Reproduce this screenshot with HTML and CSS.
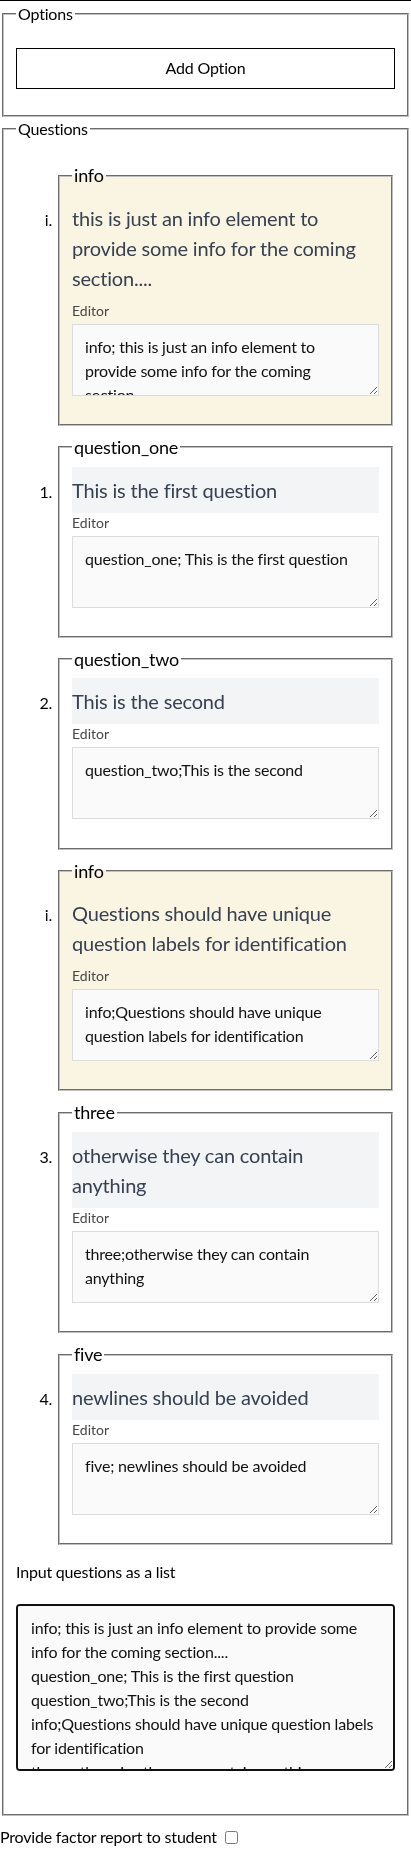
FILE: index.html
```html
<!DOCTYPE html>
<html lang="en">
<head>
<meta charset="utf-8">
<title>Questions editor</title>
<link rel="stylesheet" href="styles.css">
</head>
<body>
<div class="topbar"></div>
<form class="form">
<fieldset class="group">
<legend>Options</legend>
<button type="button" class="add-btn">Add Option</button>
</fieldset>
<fieldset class="group">
<legend>Questions</legend>
<ol class="qlist">
<li class="item info">
<fieldset class="card">
<legend>info</legend>
<div class="qtext">this is just an info element to provide some info for the coming section....</div>
<label class="editor-label">Editor</label>
<textarea class="editor">info; this is just an info element to provide some info for the coming section....</textarea>
</fieldset>
</li>
<li class="item question">
<fieldset class="card">
<legend>question_one</legend>
<div class="qtext">This is the first question</div>
<label class="editor-label">Editor</label>
<textarea class="editor">question_one; This is the first question</textarea>
</fieldset>
</li>
<li class="item question">
<fieldset class="card">
<legend>question_two</legend>
<div class="qtext">This is the second</div>
<label class="editor-label">Editor</label>
<textarea class="editor">question_two;This is the second</textarea>
</fieldset>
</li>
<li class="item info">
<fieldset class="card">
<legend>info</legend>
<div class="qtext">Questions should have unique question labels for identification</div>
<label class="editor-label">Editor</label>
<textarea class="editor">info;Questions should have unique question labels for identification</textarea>
</fieldset>
</li>
<li class="item question">
<fieldset class="card">
<legend>three</legend>
<div class="qtext">otherwise they can contain anything</div>
<label class="editor-label">Editor</label>
<textarea class="editor">three;otherwise they can contain anything</textarea>
</fieldset>
</li>
<li class="item question">
<fieldset class="card">
<legend>five</legend>
<div class="qtext">newlines should be avoided</div>
<label class="editor-label">Editor</label>
<textarea class="editor">five; newlines should be avoided</textarea>
</fieldset>
</li>
</ol>
<label class="list-label">Input questions as a list</label>
<textarea class="list-editor">info; this is just an info element to provide some info for the coming section....
question_one; This is the first question
question_two;This is the second
info;Questions should have unique question labels for identification
three;otherwise they can contain anything
five; newlines should be avoided</textarea>
</fieldset>
<div class="report">Provide factor report to student <input type="checkbox" class="report-check"></div>
</form>
</body>
</html>
```

FILE: styles.css
```css
html, body {
  margin: 0;
  padding: 0;
  background: #fff;
}

body {
  font-family: Lato, "Noto Sans", sans-serif;
  font-size: 16px;
  line-height: 1.5;
  color: #000;
  letter-spacing: -0.012em;
}

.topbar {
  height: 1px;
  background: #000;
  margin-bottom: 1px;
}

.form {
  margin: 0;
}

.group {
  margin: 0 2px;
  padding: 5.6px 12px 10px;
  border: 2px groove rgb(192, 192, 192);
}

.group > legend {
  padding: 0 2px;
  font-size: 16px;
  line-height: 24px;
}

.add-btn {
  display: block;
  box-sizing: border-box;
  width: 100%;
  height: 41px;
  margin: 16px 0;
  padding: 0;
  background: #fff;
  border: 1px solid #000;
  border-radius: 0;
  font-family: Lato, "Noto Sans", sans-serif;
  font-size: 16px;
  line-height: 24px;
  letter-spacing: -0.012em;
  color: #000;
}

.qlist {
  margin: 16px 0 15px;
  padding-left: 40px;
  counter-reset: q;
}

.item {
  margin-bottom: 8px;
}

.item.question {
  counter-increment: q;
}

.item.question::marker {
  content: counter(q) ". ";
}

.item.info::marker {
  content: "i. ";
}

.card {
  margin: 0 2px;
  padding: 5.6px 12px 10px;
  border: 2px groove rgb(192, 192, 192);
}

.card > legend {
  padding: 0 2px;
  font-size: 18px;
  line-height: 27px;
}

.info .card {
  background: #faf4e2;
}

.qtext {
  font-size: 20px;
  line-height: 30px;
  padding: 8px 0;
  color: #374151;
}

.question .qtext {
  background: #f3f4f6;
}

.editor-label {
  display: block;
  font-size: 14px;
  line-height: 20px;
  letter-spacing: 0;
  color: #474747;
  margin-bottom: 3px;
}

.editor {
  display: block;
  box-sizing: border-box;
  width: 100%;
  height: 72px;
  margin: 0 0 18.2px;
  padding: 10px 12px;
  border: 1px solid #dcdcdc;
  border-radius: 0;
  background: #fafafa;
  font-family: Lato, "Noto Sans", sans-serif;
  font-size: 16px;
  line-height: 24px;
  letter-spacing: -0.012em;
  color: #111;
  resize: vertical;
  scrollbar-width: none;
}

.list-label {
  display: block;
  line-height: 24px;
  margin-bottom: 20px;
}

.list-editor {
  display: block;
  box-sizing: border-box;
  width: 100%;
  height: 167px;
  margin: 0 0 33px;
  padding: 10px 12px 10px 13px;
  border: 2px solid #111;
  border-radius: 4px;
  background: #fafafa;
  font-family: Lato, "Noto Sans", sans-serif;
  font-size: 16px;
  line-height: 24px;
  letter-spacing: -0.012em;
  color: #111;
  resize: vertical;
  scrollbar-width: none;
}

.report {
  margin-top: 9px;
  line-height: 24px;
}

.report-check {
  margin: 3px 3px 3px 4px;
  vertical-align: -1px;
}
```
